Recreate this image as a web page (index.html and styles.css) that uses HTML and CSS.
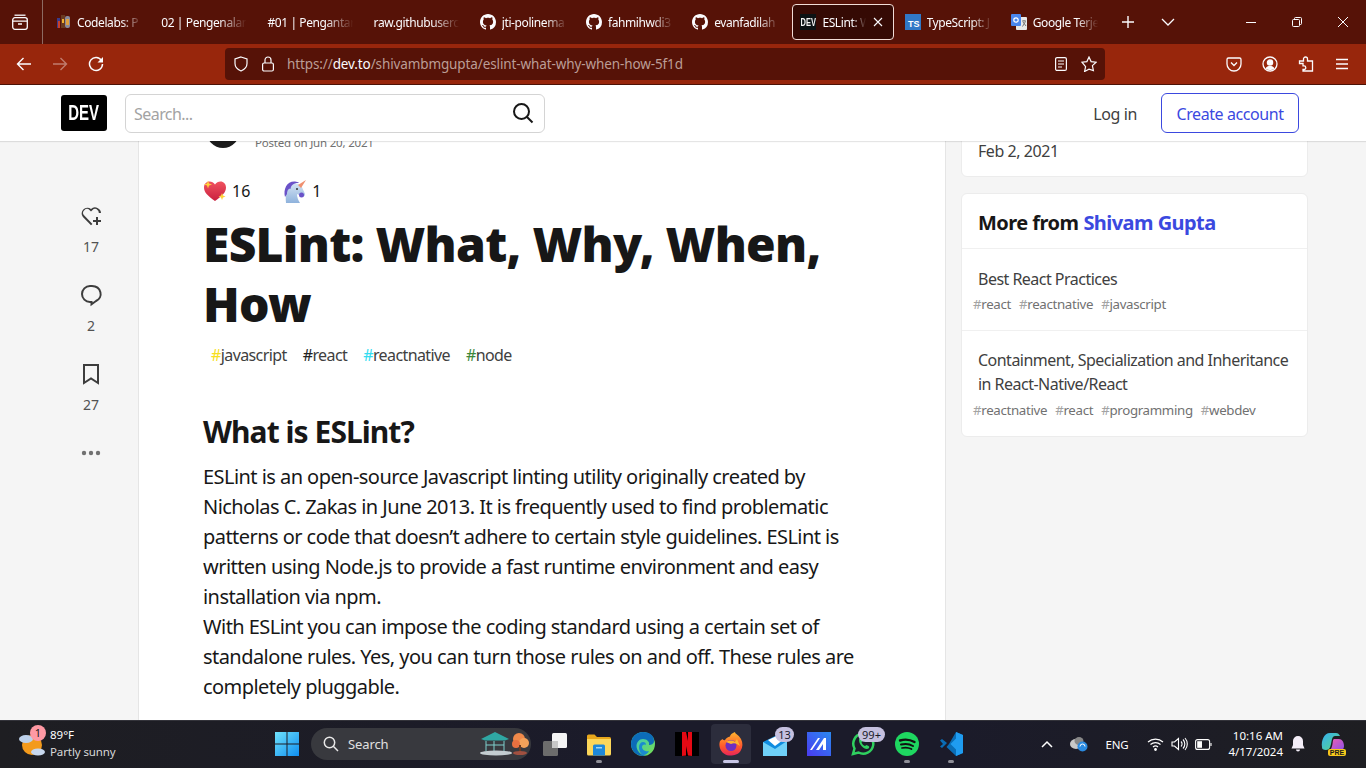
FILE: index.html
```html
<!DOCTYPE html>
<html lang="en">
<head>
<meta charset="utf-8">
<title>ESLint: What, Why, When, How</title>
<link rel="stylesheet" href="styles.css">
</head>
<body>
<svg class="defs" width="0" height="0" aria-hidden="true">
  <symbol id="gh" viewBox="0 0 16 16"><path fill="#fbfbfe" d="M8 0C3.58 0 0 3.58 0 8c0 3.54 2.29 6.53 5.47 7.59.4.07.55-.17.55-.38 0-.19-.01-.82-.01-1.49-2.01.37-2.53-.49-2.69-.94-.09-.23-.48-.94-.82-1.13-.28-.15-.68-.52-.01-.53.63-.01 1.08.58 1.23.82.72 1.21 1.87.87 2.33.66.07-.52.28-.87.51-1.07-1.78-.2-3.64-.89-3.64-3.95 0-.87.31-1.59.82-2.15-.08-.2-.36-1.02.08-2.12 0 0 .67-.21 2.2.82.64-.18 1.32-.27 2-.27.68 0 1.36.09 2 .27 1.53-1.04 2.2-.82 2.2-.82.44 1.1.16 1.92.08 2.12.51.56.82 1.27.82 2.15 0 3.07-1.87 3.75-3.65 3.95.29.25.54.73.54 1.48 0 1.07-.01 1.93-.01 2.2 0 .21.15.46.55.38A8.013 8.013 0 0016 8c0-4.42-3.58-8-8-8z"/></symbol>
</svg>
<div class="screen">

  <div class="tabstrip">
    <div class="tabs-btn">
      <svg width="16" height="16" viewBox="0 0 16 16" fill="none" stroke="#fbfbfe" stroke-width="1.3"><path d="M2.5 1.2h11"/><rect x="0.7" y="3.7" width="14.6" height="11.6" rx="2.2"/><path d="M1 7.2h14M6 10h4"/></svg>
    </div>
    <div class="tabs">
      <div class="tab">
        <svg class="fav" width="16" height="16" viewBox="0 0 16 16"><rect x="2" y="4" width="3" height="10" fill="#3a3a8a"/><rect x="3" y="7" width="2" height="7" fill="#c8402a"/><rect x="6" y="1" width="4" height="13" fill="#6a3a20"/><rect x="7" y="5" width="2" height="4" fill="#f0b030"/><rect x="10" y="2" width="5" height="12" rx="2" fill="#8a8a9a"/><rect x="11" y="5" width="3" height="6" fill="#e0a040"/></svg>
        <span class="tab-title">Codelabs: P</span>
      </div>
      <div class="tab"><span class="tab-title">02 | Pengenalan</span></div>
      <div class="tab"><span class="tab-title">#01 | Pengantar</span></div>
      <div class="tab"><span class="tab-title">raw.githubuserc</span></div>
      <div class="tab"><svg class="fav" width="16" height="16"><use href="#gh"/></svg><span class="tab-title">jti-polinema</span></div>
      <div class="tab"><svg class="fav" width="16" height="16"><use href="#gh"/></svg><span class="tab-title">fahmihwdi3</span></div>
      <div class="tab"><svg class="fav" width="16" height="16"><use href="#gh"/></svg><span class="tab-title">evanfadilah</span></div>
      <div class="tab tab-active">
        <span class="fav dev-fav"><span class="narrow">DEV</span></span>
        <span class="tab-title">ESLint: W</span>
        <svg class="tab-close" width="12" height="12" viewBox="0 0 12 12" stroke="#fbfbfe" stroke-width="1.1"><path d="M2 2l8 8M10 2l-8 8"/></svg>
      </div>
      <div class="tab">
        <span class="fav ts-fav">TS</span>
        <span class="tab-title">TypeScript: J</span>
      </div>
      <div class="tab">
        <svg class="fav" width="16" height="16" viewBox="0 0 16 16"><rect x="5" y="3" width="11" height="13" rx="1" fill="#e8e8e8"/><rect y="0" width="10" height="12" rx="1" fill="#4a86ee"/><path d="M11 7h4M13 6v1M11.5 12.5l3-5M12 8l3 4" stroke="#777" fill="none"/><circle cx="5" cy="6" r="2.2" fill="none" stroke="#fff" stroke-width="1.2"/></svg>
        <span class="tab-title">Google Terje</span>
      </div>
    </div>
    <div class="strip-btn">
      <svg width="14" height="14" viewBox="0 0 14 14" stroke="#fbfbfe" stroke-width="1.4"><path d="M7 1v12M1 7h12"/></svg>
    </div>
    <div class="strip-btn">
      <svg width="14" height="10" viewBox="0 0 14 10" fill="none" stroke="#fbfbfe" stroke-width="1.3"><path d="M1 2l6 6 6-6"/></svg>
    </div>
    <div class="winctl">
      <div class="win-btn"><svg width="12" height="12" viewBox="0 0 12 12" stroke="#fbfbfe"><path d="M1 6.5h10"/></svg></div>
      <div class="win-btn"><svg width="12" height="12" viewBox="0 0 12 12" fill="none" stroke="#fbfbfe"><rect x="1.5" y="3.5" width="7" height="7" rx="1"/><path d="M3.5 3.5V2.5a1 1 0 011-1h5a1 1 0 011 1v5a1 1 0 01-1 1h-1"/></svg></div>
      <div class="win-btn"><svg width="12" height="12" viewBox="0 0 12 12" stroke="#fbfbfe"><path d="M1 1l10 10M11 1L1 11"/></svg></div>
    </div>
  </div>

  <div class="toolbar">
    <div class="tool"><svg width="16" height="16" viewBox="0 0 16 16" fill="none" stroke="#fbfbfe" stroke-width="1.4"><path d="M15 8H1.5M7.5 2l-6 6 6 6"/></svg></div>
    <div class="tool tool-off"><svg width="16" height="16" viewBox="0 0 16 16" fill="none" stroke="#fbfbfe" stroke-width="1.4"><path d="M1 8h13.5M8.500 2l6 6-6 6"/></svg></div>
    <div class="tool"><svg width="16" height="16" viewBox="0 0 16 16" fill="none" stroke="#fbfbfe" stroke-width="1.5"><path d="M13.500 4.500A6.500 6.500 0 1 0 14.500 8"/><path fill="#fbfbfe" stroke="none" d="M15 1v5.500H9.500z"/></svg></div>
    <div class="urlbar">
      <svg class="url-shield" width="16" height="16" viewBox="0 0 16 16" fill="none" stroke="#fbfbfe" stroke-width="1.2"><path d="M8 1l6 2v4.500c0 3.500-2.500 6-6 7.500-3.500-1.500-6-4-6-7.500V3z"/></svg>
      <svg class="url-lock" width="14" height="16" viewBox="0 0 14 16" fill="none" stroke="#fbfbfe" stroke-width="1.2"><rect x="1.600" y="7" width="10.800" height="8" rx="1.500"/><path d="M4 7V4a3 3 0 016 0v3"/></svg>
      <span class="url-text">https://<b>dev.to</b>/shivambmgupta/eslint-what-why-when-how-5f1d</span>
      <svg class="url-reader" width="14" height="16" viewBox="0 0 14 16" fill="none" stroke="#fbfbfe" stroke-width="1.2"><rect x="1.600" y="1.600" width="10.800" height="12.800" rx="1.500"/><path d="M4 5h6M4 8h6M4 11h4"/></svg>
      <svg class="url-star" width="16" height="16" viewBox="0 0 16 16" fill="none" stroke="#fbfbfe" stroke-width="1.2"><path d="M8 1l2.100 4.600 5 .6-3.700 3.400 1 4.900L8 13.100l-4.400 2.400 1-4.900L.9 6.200l5-.6z"/></svg>
    </div>
    <div class="tool-right">
      <div class="tool"><svg width="16" height="16" viewBox="0 0 16 16" fill="none" stroke="#fbfbfe" stroke-width="1.300"><path d="M2.500 2h11A1.500 1.500 0 0115 3.500V8A7 7 0 011 8V3.500A1.500 1.500 0 012.500 2z"/><path d="M5 6.500l3 3 3-3"/></svg></div>
      <div class="tool"><svg width="16" height="16" viewBox="0 0 16 16" fill="none" stroke="#fbfbfe" stroke-width="1.300"><circle cx="8" cy="8" r="7"/><circle cx="8" cy="6.500" r="2.600" fill="#fbfbfe"/><path fill="#fbfbfe" stroke="none" d="M3.500 12.500C4.500 10.500 6 10 8 10s3.500.5 4.500 2.500A6.500 6.500 0 018 14a6.500 6.500 0 01-4.500-1.500z"/></svg></div>
      <div class="tool"><svg width="16" height="16" viewBox="0 0 16 16" fill="none" stroke="#fbfbfe" stroke-width="1.300"><path d="M1.500 7.500V5h4V3a2 2 0 014 0v2h5v10H5v-1.500h1a1.800 1.800 0 000-3.600H5V7.500z"/></svg></div>
      <div class="tool"><svg width="16" height="16" viewBox="0 0 16 16" stroke="#fbfbfe" stroke-width="1.300"><path d="M2 3.500h12M2 8h12M2 12.500h12"/></svg></div>
    </div>
  </div>

  <header class="dev-header">
    <div class="dev-logo"><span class="narrow">DEV</span></div>
    <div class="search">
      <span class="search-hint">Search...</span>
      <svg width="24" height="24" viewBox="0 0 24 24" fill="none" stroke="#171717" stroke-width="2"><circle cx="10.500" cy="10.500" r="7.500"/><path d="M16 16l5.500 5.500"/></svg>
    </div>
    <a class="login">Log in</a>
    <a class="create">Create account</a>
  </header>

  <main class="main">
    <nav class="rail">
      <div class="rail-item">
        <svg width="24" height="24" viewBox="0 0 24 24" fill="#3d3d3d"><path d="M18.900 4.300a5.800 5.800 0 00-6.900.6 5.800 5.800 0 00-8.100 8.200L12 21.300l1.400-1.400-1.400-1.500-6.700-6.800a3.800 3.800 0 015.400-5.400L12 7.500l1.300-1.300a3.800 3.800 0 015.400 0c.8.800 1.100 1.700 1.100 2.800H22c0-1.900-1-3.700-3.100-4.700z"/><path d="M19 13h-2v3h-3v2h3v3h2v-3h3v-2h-3z"/></svg>
        <span class="rail-num">17</span>
      </div>
      <div class="rail-item">
        <svg width="24" height="24" viewBox="0 0 24 24" fill="none" stroke="#3d3d3d" stroke-width="2"><path d="M11 3h2a9 8 0 014 15l-4.500 3.200V19H11a8 8 0 010-16z"/></svg>
        <span class="rail-num">2</span>
      </div>
      <div class="rail-item">
        <svg width="24" height="24" viewBox="0 0 24 24" fill="none" stroke="#3d3d3d" stroke-width="2"><path d="M5 3h14v18l-7-4.500L5 21z"/></svg>
        <span class="rail-num">27</span>
      </div>
      <div class="rail-item">
        <svg width="24" height="24" viewBox="0 0 24 24" fill="#717171"><circle cx="5" cy="12" r="2.200"/><circle cx="12" cy="12" r="2.200"/><circle cx="19" cy="12" r="2.200"/></svg>
      </div>
    </nav>

    <article class="article">
      <div class="byline">
        <div class="avatar"></div>
        <span class="posted">Posted on Jun 20, 2021</span>
      </div>
      <div class="reactions">
        <span class="reaction">
          <svg width="24" height="24" viewBox="0 0 24 24"><defs><linearGradient id="hg" x1="0" y1="0" x2="0" y2="1"><stop offset="0" stop-color="#f0525f"/><stop offset="1" stop-color="#c9203f"/></linearGradient></defs><path fill="url(#hg)" d="M12 22C5 17 1 13.500 1 8.500 1 5 3.500 2.500 6.500 2.500c2.300 0 4.200 1.200 5.500 3 1.300-1.800 3.200-3 5.500-3C20.500 2.500 23 5 23 8.500c0 5-4 8.500-11 13.500z"/><path fill="#ffd23c" d="M5 1.500l1 3 3 1-3 1-1 3-1-3-3-1 3-1zM19 14l1 2.500 2.500 1-2.500 1-1 2.500-1-2.500-2.500-1 2.500-1z"/></svg>
          16
        </span>
        <span class="reaction reaction-uni">
          <svg width="24" height="24" viewBox="0 0 24 24"><defs><linearGradient id="ug" x1="0" y1="0" x2="0" y2="1"><stop offset="0" stop-color="#d4e4f4"/><stop offset="1" stop-color="#8fb2dc"/></linearGradient></defs><path fill="url(#ug)" d="M3 24C2 14 4 5 12 4l6 2 4 9c0 3-3 3-5 1.500L14 15c0 3 1 6 3 9z"/><path fill="#6a52c8" d="M2 18C0 10 4 2 12 2.500c1.500.1 3 .5 4 1.500-5-.5-8 2-8.500 6-2-1-3.500 2-3.500 5z"/><path fill="#f09070" d="M15 6l8-5-5 8z"/><circle cx="18.500" cy="16" r="2.500" fill="#6a52c8"/><circle cx="14" cy="10" r="1" fill="#333"/></svg>
          1
        </span>
      </div>
      <h1 class="title">ESLint: What, Why, When, How</h1>
      <div class="tags">
        <a class="tag"><i class="h-js">#</i>javascript</a>
        <a class="tag"><i class="h-react">#</i>react</a>
        <a class="tag"><i class="h-rn">#</i>reactnative</a>
        <a class="tag"><i class="h-node">#</i>node</a>
      </div>
      <h2 class="heading">What is ESLint?</h2>
      <p class="body">ESLint is an open-source Javascript linting utility originally created by Nicholas C. Zakas in June 2013. It is frequently used to find problematic patterns or code that doesn’t adhere to certain style guidelines. ESLint is written using Node.js to provide a fast runtime environment and easy installation via npm.<br>With ESLint you can impose the coding standard using a certain set of standalone rules. Yes, you can turn those rules on and off. These rules are completely pluggable.</p>
    </article>

    <aside class="side">
      <div class="card card-top">Feb 2, 2021</div>
      <div class="card">
        <div class="card-head">More from <a>Shivam Gupta</a></div>
        <div class="more-item">
          <div class="more-title">Best React Practices</div>
          <div class="more-tags"><span><i>#</i>react</span><span><i>#</i>reactnative</span><span><i>#</i>javascript</span></div>
        </div>
        <div class="more-item">
          <div class="more-title">Containment, Specialization and Inheritance in React-Native/React</div>
          <div class="more-tags"><span><i>#</i>reactnative</span><span><i>#</i>react</span><span><i>#</i>programming</span><span><i>#</i>webdev</span></div>
        </div>
      </div>
    </aside>
  </main>

  <footer class="taskbar">
    <div class="weather">
      <div class="weather-icon">
        <svg width="28" height="26" viewBox="0 0 28 26"><circle cx="13" cy="14" r="10" fill="#f39a1c"/><ellipse cx="7" cy="8" rx="7" ry="4" fill="#bcd0ea"/><ellipse cx="19" cy="21" rx="7" ry="3.500" fill="#c8d8ee"/></svg>
        <span class="weather-badge">1</span>
      </div>
      <div class="weather-text"><span class="w-temp">89°F</span><span class="w-desc">Partly sunny</span></div>
    </div>
    <div class="start">
      <svg width="24" height="24" viewBox="0 0 24 24"><defs><linearGradient id="wg" x1="0" y1="0" x2="1" y2="1"><stop offset="0" stop-color="#6fe2fb"/><stop offset="1" stop-color="#0f8ef0"/></linearGradient></defs><path fill="url(#wg)" d="M0 0h11.500v11.500H0zM12.500 0H24v11.500H12.500zM0 12.500h11.500V24H0zM12.500 12.500H24V24H12.500z"/></svg>
    </div>
    <div class="ts-pill">
      <svg width="16" height="16" viewBox="0 0 16 16" fill="none" stroke="#e8e8e8" stroke-width="1.500"><circle cx="6.500" cy="6.500" r="5.200"/><path d="M10.300 10.300L15 15"/></svg>
      <span class="ts-word">Search</span>
      <svg class="ts-art" width="52" height="26" viewBox="0 0 52 26"><path fill="#2fa7a3" d="M1 8L15 1l14 7-4 1.500H5z"/><path stroke="#7fd0cc" fill="none" d="M6 10v10M14 10v10M24 10v10M6 14h18"/><ellipse cx="16" cy="22" rx="16" ry="2.500" fill="#c4cdd0"/><circle cx="39" cy="8" r="6" fill="#f08a4a"/><circle cx="44" cy="12" r="5" fill="#f4a35a"/><circle cx="36" cy="13" r="4" fill="#e87040"/><path d="M40 14v7" stroke="#6a3a20" stroke-width="2"/><ellipse cx="40" cy="22" rx="7" ry="2" fill="#a05040"/></svg>
    </div>
    <div class="apps">
      <div class="app">
        <svg width="24" height="24" viewBox="0 0 24 24"><rect x="9" y="1" width="15" height="15" rx="1.500" fill="#f4f4f4"/><rect x="0" y="9" width="15" height="15" rx="1.500" fill="#6c6c6c"/><rect x="9" y="9" width="6" height="7" fill="#c8c8c8"/></svg>
      </div>
      <div class="app app-dot">
        <svg width="24" height="24" viewBox="0 0 24 24"><path fill="#e8a81c" d="M0 4a1.500 1.500 0 011.500-1.500h6L10 5h12.500A1.500 1.500 0 0124 6.500V10H0z"/><path fill="#fcd75a" d="M0 7h24v15a1.500 1.500 0 01-1.500 1.500h-21A1.500 1.500 0 010 22z"/><path fill="#1e88d8" d="M6 14a1.500 1.500 0 011.500-1.500h9A1.500 1.500 0 0118 14v9.500H6z"/><rect x="9" y="15" width="6" height="1.500" fill="#9bd6f8"/></svg>
      </div>
      <div class="app">
        <svg width="24" height="24" viewBox="0 0 24 24"><defs><linearGradient id="eg" x1="0" y1="0" x2="1" y2="1"><stop offset="0" stop-color="#2bc3d6"/><stop offset="1" stop-color="#7be04a"/></linearGradient></defs><circle cx="12" cy="12" r="12" fill="url(#eg)"/><path fill="#0c6cb8" d="M0 12C0 5 6 0 12 0c6 0 11 3 11 9 0 3-3 4-5 4 1-3-2-6-6-6-4 0-6.500 3.500-6.500 7 0 5 5 10 9.500 9.500-1 .3-2 .5-3 .5C5.500 24 0 18.500 0 12z"/><path fill="#1a8ad0" d="M8 15c0-3 2-5 4-5s3 1 3 3c-2-1-4 0-4 2 0 2.500 3 5 7 4-1 2-3 4-6 4-2-.5-4-4-4-8z"/></svg>
      </div>
      <div class="app">
        <svg width="24" height="24" viewBox="0 0 24 24"><rect width="24" height="24" fill="#000"/><path fill="#e50914" d="M7 0h4l2 9V0h4v24l-4-.6L11 14v9.600L7 24z"/></svg>
      </div>
      <div class="app app-active app-line">
        <svg width="24" height="24" viewBox="0 0 24 24"><defs><linearGradient id="fg" x1="0.500" y1="0" x2="0.500" y2="1"><stop offset="0" stop-color="#ffb52e"/><stop offset="0.600" stop-color="#ff5a2c"/><stop offset="1" stop-color="#e8245a"/></linearGradient></defs><path fill="url(#fg)" d="M1 9l2.500-2C4 8 5 8.500 6 8c1-2 3-3 5-3.500C11 3 13 1 16 0c0 2 4 3 6 7 2 4 2 8-.5 12S13 24 10 23.500C5 23 1 19 .5 14 .3 12 .5 10.500 1 9z"/><circle cx="12" cy="13.500" r="5.500" fill="#6f2fc0"/><path fill="#ffb52e" d="M7 10c3-2 7-2 9 0l2-3 3 7-3-2c-2-1-4-1-6 0z"/></svg>
      </div>
      <div class="app">
        <svg width="24" height="24" viewBox="0 0 24 24"><path fill="#0f8ce0" d="M0 10l14-7v5l10-3v19H0z"/><path fill="#6fd0f8" d="M0 10l12 7 12-8v15H0z"/><path fill="#fff" d="M5 8L18 2l2 6-8 6z"/></svg>
        <span class="badge">13</span>
      </div>
      <div class="app">
        <svg width="24" height="24" viewBox="0 0 24 24"><defs><linearGradient id="mg" x1="0" y1="1" x2="1" y2="0"><stop offset="0" stop-color="#4a3af0"/><stop offset="1" stop-color="#2a8af0"/></linearGradient></defs><rect width="24" height="24" fill="url(#mg)"/><path fill="#fff" d="M3 18L11 6h2L5 18zM9 18l8-12h2v12h-3v-6l-4 6z"/></svg>
      </div>
      <div class="app">
        <svg width="24" height="24" viewBox="0 0 24 24" fill="none"><path stroke="#2fd05f" stroke-width="2.500" d="M2 22l1.500-5.500A10 10 0 1 1 7.500 20.500z"/><path fill="#2fd05f" d="M8 7c1-1 2-1 2.500 0l1 2-1 1.500c.5 1.500 2 3 3.500 3.500l1.500-1 2 1c1 .5 1 1.500 0 2.500-3 2-10-3-9.500-9.500z"/></svg>
        <span class="badge badge-wide">99+</span>
      </div>
      <div class="app app-dot">
        <svg width="24" height="24" viewBox="0 0 24 24" fill="none"><circle cx="12" cy="12" r="12" fill="#1ed760"/><path stroke="#111" stroke-width="2.400" stroke-linecap="round" d="M5 8.500c5-1.500 10-1 14.500 1.500"/><path stroke="#111" stroke-width="2" stroke-linecap="round" d="M6 12.500c4-1 8.500-.7 12 1.500"/><path stroke="#111" stroke-width="1.700" stroke-linecap="round" d="M7 16c3.500-.8 6.500-.5 9.500 1"/></svg>
      </div>
      <div class="app app-dot">
        <svg width="24" height="24" viewBox="0 0 24 24"><path fill="#0a6db5" d="M1 8.500L3 7l5 4-5 5-2-1.500L4 12zM17 0l7 3v18l-7 3-9.500-9 2.500-3z"/><path fill="#1f9cf0" d="M17 0l7 3v18l-7 3zM17 6.500L11.500 12l5.500 5.500z"/></svg>
      </div>
    </div>
    <div class="tray">
      <div class="tr tr-chev"><svg width="12" height="8" viewBox="0 0 12 8" fill="none" stroke="#fff" stroke-width="1.500"><path d="M1 7l5-5 5 5"/></svg></div>
      <div class="tr tr-cloud"><svg width="18" height="16" viewBox="0 0 18 16"><ellipse cx="6" cy="8" rx="6" ry="5" fill="#c8c8c8"/><ellipse cx="9" cy="5" rx="4.500" ry="4" fill="#888"/><circle cx="12.500" cy="10.500" r="5" fill="#2a8ae0"/><path d="M10 10.500a2.500 2.500 0 015 0" stroke="#fff" fill="none"/></svg></div>
      <div class="tr tr-eng">ENG</div>
      <div class="tr tr-icon"><svg width="17" height="14" viewBox="0 0 17 14" fill="none" stroke="#fff" stroke-width="1.200"><path d="M1 5a11 11 0 0115 0M3.500 7.500a7.500 7.500 0 0110 0M6 10a3.800 3.800 0 015 0"/><circle cx="8.500" cy="12.500" r=".8" fill="#fff"/></svg></div>
      <div class="tr tr-icon"><svg width="17" height="14" viewBox="0 0 17 14" fill="none" stroke="#fff" stroke-width="1.100"><path d="M1 5h2.500L7.500 1.500v11L3.500 9H1zM10 4.500a3.500 3.500 0 010 5M12 2.500a6.500 6.500 0 010 9M14 1a9 9 0 010 12"/></svg></div>
      <div class="tr tr-icon"><svg width="17" height="11" viewBox="0 0 17 11" fill="none" stroke="#fff" stroke-width="1.100"><rect x=".6" y=".6" width="14" height="9.800" rx="2"/><rect x="2.200" y="2.200" width="4.800" height="6.600" fill="#fff" stroke="none"/><path d="M16 4v3"/></svg></div>
      <div class="clock"><span>10:16 AM</span><span>4/17/2024</span></div>
      <div class="tr tr-bell"><svg width="16" height="16" viewBox="0 0 16 16" fill="#f4eef8"><path d="M8 0a5 5 0 00-5 5v4l-1.500 3.500h13L13 9V5a5 5 0 00-5-5zM6 13.500h4a2 2 0 01-4 0z"/></svg></div>
      <div class="copilot">
        <svg width="24" height="24" viewBox="0 0 24 24"><defs><linearGradient id="cp" x1="0" y1="0" x2="1" y2="1"><stop offset="0" stop-color="#36b0f0"/><stop offset="0.600" stop-color="#4ac8b0"/><stop offset="1" stop-color="#a8dc50"/></linearGradient><linearGradient id="cp2" x1="0" y1="0" x2="1" y2="1"><stop offset="0" stop-color="#f060b0"/><stop offset="1" stop-color="#8a50e8"/></linearGradient></defs><path fill="url(#cp)" d="M1 15C0 9 3 1 9 1h6c2 0 3 1 4 3h-5c-3 0-3 4-4 8-.7 3-1.500 6-5 6-2.500 0-4.500-1-4-3z"/><path fill="url(#cp2)" d="M13 7h5c3 0 5 3 5 7 0 3-2 5-5 5H8c2-1 3-4 3.500-7 .3-2 .5-5 1.500-5z"/></svg>
        <span class="pre">PRE</span>
      </div>
    </div>
  </footer>
</div>
</body>
</html>
```

FILE: styles.css
```css
* { box-sizing: border-box; }
html, body { margin: 0; padding: 0; width: 1366px; height: 768px; overflow: hidden; }
body { font-family: "Noto Sans", "Open Sans", "Liberation Sans", sans-serif; color: #171717; background: #f5f5f5; }
i { font-style: normal; }
b { font-weight: 400; }
.defs { display: block; height: 0; }
.screen { display: flex; flex-direction: column; width: 1366px; height: 768px; overflow: hidden; }
.narrow { display: inline-block; font-family: "Liberation Sans", Arial, sans-serif; font-weight: 700; transform: scaleX(.68); }

/* Tab strip */
.tabstrip { display: flex; align-items: center; flex: 0 0 44px; height: 44px; background: #561207; color: #fbfbfe; }
.tabs-btn { display: flex; align-items: center; justify-content: center; width: 43px; height: 44px; padding-right: 3px; border-right: 1px solid #8d6a62; }
.tabs { display: flex; margin-left: 4px; width: 1062px; }
.tab { display: flex; align-items: center; flex: 0 0 106.2px; min-width: 0; height: 36px; padding: 0 4px 0 7px; gap: 6px; border: 1px solid transparent; }
.fav { flex: 0 0 16px; }
.tab-title { flex: 1; min-width: 0; padding-top: 1px; overflow: visible; white-space: nowrap; font-size: 12px; letter-spacing: -.4px; -webkit-mask-image: linear-gradient(90deg, #000 62%, transparent 92%); mask-image: linear-gradient(90deg, #000 62%, transparent 92%); }
.tab-active { flex: 0 0 102px; margin: 0 2.100px; padding-right: 0; background: #350a04; border: 1px solid #f1dcd6; border-radius: 4px; }
.tab-close { flex: 0 0 12px; margin-right: 9px; margin-left: -4px; }
.dev-fav { display: flex; align-items: center; justify-content: center; height: 16px; background: #0c1214; color: #f4f4f4; font-size: 11px; overflow: hidden; }
.ts-fav { display: flex; align-items: flex-end; justify-content: flex-end; height: 16px; background: #3178c6; color: #fff; font-family: "Liberation Sans", sans-serif; font-weight: 700; font-size: 9px; line-height: 11px; padding-right: 1px; }
.strip-btn { display: flex; align-items: center; justify-content: center; width: 40px; height: 44px; margin-left: -1px; }
.strip-btn + .strip-btn { margin-left: 0; }
.winctl { display: flex; margin-left: auto; }
.win-btn { display: flex; align-items: center; justify-content: center; width: 46px; height: 44px; }

/* Toolbar */
.toolbar { display: flex; align-items: center; flex: 0 0 41px; height: 41px; padding-left: 6px; background: #98260c; border-bottom: 1px solid #4d1206; }
.tool { display: flex; align-items: center; justify-content: center; width: 36px; height: 32px; }
.tool-off { opacity: .4; }
.urlbar { display: flex; align-items: center; width: 880px; height: 32px; margin-left: 111px; padding: 0 8px; background: #561207; border-radius: 4px; color: #bb9d96; font-size: 13.500px; }
.url-shield { margin-right: 12px; }
.url-lock { margin-right: 12px; }
.url-text { flex: 1; white-space: nowrap; letter-spacing: -.11px; }
.url-text b { color: #fbfbfe; }
.url-reader { margin-right: 13px; }
.tool-right { display: flex; margin-left: 111px; }

/* DEV header */
.dev-header { display: flex; align-items: center; position: relative; z-index: 2; flex: 0 0 56px; height: 56px; padding: 0 67px 0 61px; background: #fff; box-shadow: 0 1px 1px rgba(0,0,0,.1); }
.dev-logo { display: flex; align-items: center; justify-content: center; width: 46px; height: 36px; background: #000; border-radius: 3px; color: #fff; font-size: 22px; overflow: hidden; }
.search { display: flex; align-items: center; justify-content: space-between; width: 420px; height: 39px; margin-left: 18px; padding: 0 9px 0 8px; background: #fff; border: 1px solid #d4d4d4; border-radius: 6px; }
.search-hint { padding-top: 2px; color: #a3a3a3; font-size: 16px; letter-spacing: -.55px; }
.login { margin-left: auto; margin-right: 24px; padding-top: 2px; font-size: 16px; color: #404040; letter-spacing: -.4px; }
.create { display: flex; align-items: center; justify-content: center; width: 138px; height: 40px; padding-top: 2px; border: 1px solid #3b49df; border-radius: 6px; color: #3b49df; font-size: 16px; letter-spacing: -.42px; }

/* Main */
.main { display: grid; grid-template-columns: 138px 808px 361px; flex: 1; min-height: 0; overflow: hidden; }
.rail { display: flex; flex-direction: column; align-items: center; gap: 26px; padding: 63px 0 0 44px; }
.rail-item { display: flex; flex-direction: column; align-items: center; gap: 9px; width: 40px; height: 53px; }
.rail-num { font-size: 14px; line-height: 20px; color: #525252; }

.article { background: #fff; border-left: 1px solid #e5e5e5; border-right: 1px solid #e5e5e5; padding: 0 64px; height: 700px; }
.byline { display: flex; align-items: flex-end; gap: 15px; margin-top: -29px; margin-bottom: 31px; padding-left: 3px; }
.avatar { width: 34px; height: 36px; border-radius: 50%; background: #1c1c1c; }
.posted { font-size: 11.500px; line-height: 14px; margin-bottom: -2px; color: #717171; letter-spacing: -.2px; }
.reactions { display: flex; height: 24px; font-size: 16px; }
.reaction { display: flex; align-items: center; gap: 5px; line-height: 24px; }
.reaction-uni { margin-left: 33px; }
.title { margin: 11px 0 0; width: 670px; font-size: 48px; line-height: 60px; font-weight: 900; letter-spacing: -.72px; color: #171717; }
.tags { display: flex; gap: 16px; height: 30px; margin-top: 6px; padding-left: 8px; align-items: center; font-size: 16px; color: #404040; letter-spacing: -.6px; }
.h-js { color: #f7df1e; }
.h-react { color: #222; }
.h-rn { color: #33dcf0; }
.h-node { color: #3c873a; }
.heading { margin: 43px 0 0; font-size: 30px; line-height: 38px; font-weight: 700; letter-spacing: -.95px; }
.body { margin: 11px 0 0; width: 660px; font-size: 20px; line-height: 30px; letter-spacing: -.55px; }

.side { padding-left: 15px; }
.card { background: #fff; border: 1px solid #ececec; border-radius: 6px; margin-bottom: 16px; width: 347px; }
.card-top { display: flex; align-items: flex-end; margin-top: -40px; height: 76px; padding: 0 16px 13px; font-size: 16px; line-height: 24px; color: #404040; letter-spacing: -.45px; }
.card-head { display: flex; align-items: center; gap: 5px; height: 55px; padding: 2px 16px 0; border-bottom: 1px solid #f0f0f0; font-size: 20px; font-weight: 700; letter-spacing: -.55px; }
.card-head a { color: #3b49df; }
.more-item { padding: 18px 16px 16px; border-bottom: 1px solid #f0f0f0; }
.more-item:last-child { border-bottom: 0; padding-top: 17px; }
.more-item:last-child .more-tags { margin-top: 4px; }
.more-title { font-size: 16px; line-height: 24px; color: #404040; letter-spacing: -.52px; }
.more-tags { display: flex; gap: 8px; margin-top: 3px; margin-left: -5px; font-size: 13.300px; line-height: 20px; color: #717171; letter-spacing: -.33px; }
.more-tags i { color: #a3a3a3; }

/* Taskbar */
.taskbar { display: flex; align-items: center; flex: 0 0 48px; height: 48px; background: linear-gradient(90deg, #1e1e22, #1b1b2a 45%, #1b1b2a 70%, #1e1e22); color: #fff; position: relative; z-index: 3; box-shadow: inset 0 1px 0 #33333a; }
.weather { display: flex; align-items: center; width: 265px; padding-left: 19px; }
.weather-icon { position: relative; width: 28px; height: 26px; }
.weather-badge { position: absolute; left: 11px; top: -6px; width: 16px; height: 16px; border-radius: 50%; background: #ff99a4; color: #1a1a1a; font-size: 11px; line-height: 16px; text-align: center; }
.weather-text { display: flex; flex-direction: column; margin: -2px 0 0 3px; }
.w-temp { font-size: 11.500px; line-height: 17px; }
.w-desc { font-size: 11.500px; line-height: 17px; color: #d8d8d8; letter-spacing: -.1px; }
.start { display: flex; align-items: center; justify-content: center; width: 44px; }
.ts-pill { display: flex; align-items: center; width: 220px; height: 32px; margin-left: 2px; padding-left: 12px; border-radius: 16px; background: #38393e; }
.ts-word { margin-left: 9px; font-size: 13px; color: #e0e0e0; letter-spacing: -.1px; }
.ts-art { margin-left: auto; margin-right: -1px; }
.apps { display: flex; margin-left: 2px; }
.app { position: relative; display: flex; align-items: center; justify-content: center; width: 44px; height: 40px; }
.app-active { margin: 0 2px; width: 40px; background: #2c2d3c; border-radius: 4px; }
.app-line::after { content: ""; position: absolute; left: 12px; bottom: 1px; width: 16px; height: 3px; border-radius: 2px; background: #c8c6e6; }
.app-dot::after { content: ""; position: absolute; left: 19px; bottom: 1px; width: 6px; height: 3px; border-radius: 2px; background: #8f8f98; }
.badge { position: absolute; left: 22px; top: 3px; width: 19px; height: 15px; border-radius: 8px; background: #c5c0df; color: #1a1a2a; font-size: 11px; line-height: 15px; text-align: center; }
.badge-wide { left: 17px; width: 27px; }
.tray { display: flex; align-items: center; margin-left: auto; padding-right: 17px; font-size: 11.500px; }
.tr { display: flex; align-items: center; justify-content: center; width: 24px; }
.tr-cloud { margin-left: 8px; }
.tr-eng { width: 36px; margin: 0 8px; letter-spacing: -.1px; }
.clock { display: flex; flex-direction: column; align-items: flex-end; width: 68px; line-height: 16px; }
.tr-bell { margin-left: 3px; }
.copilot { position: relative; display: flex; justify-content: center; width: 32px; margin-left: 7px; }
.pre { position: absolute; right: 3px; bottom: 0; height: 7px; width: 18px; text-align: center; background: #f8c81c; border-radius: 2px; color: #1a1a1a; font-size: 7px; line-height: 7px; font-weight: 700; font-family: "Liberation Sans", sans-serif; }
```
